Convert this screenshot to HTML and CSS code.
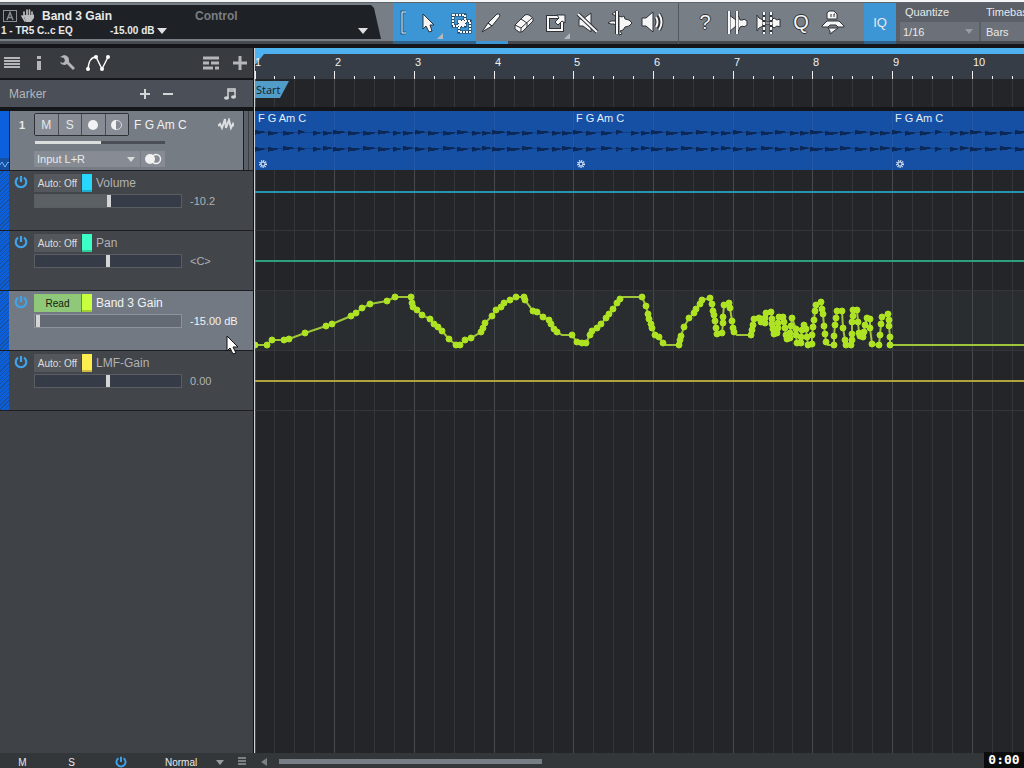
FILE: index.html
```
<!DOCTYPE html>
<html lang="en">
<head>
  <meta charset="UTF-8" />
  <meta name="viewport" content="width=device-width, initial-scale=1" />
  <title>Arrange - Band 3 Gain</title>
  <link rel="stylesheet" href="styles.css">
</head>
<body>
  <svg class="defs" aria-hidden="true">
    <symbol id="power" viewBox="0 0 14 14">
      <path d="M4 2.6A5.3 5.3 0 1 0 10 2.6" fill="none" stroke="currentColor" stroke-width="2.2"/>
      <path d="M7 1v6" stroke="currentColor" stroke-width="2.2"/>
    </symbol>
  </svg>

  <header class="toolbar">
    <div class="display">
      <div class="display-row">
        <svg class="badge-a" viewBox="0 0 14 12"><rect x=".5" y=".5" width="13" height="11" fill="none" stroke="#8b8e92"/><path d="M4 10l3-7.5L10 10M5 7.5h4" fill="none" stroke="#8b8e92" stroke-width="1.4"/></svg>
        <svg class="hand" viewBox="0 0 14 14"><path d="M3 8V3M6 7V1M8.5 7V1M11 8V3M1 7l3 5" stroke="#b9bbbd" stroke-width="1.7" stroke-linecap="round"/><path d="M2.5 6H12l1-1v4l-3 4H5z" fill="#b9bbbd"/></svg>
        <b class="param">Band 3 Gain</b>
        <b class="control">Control</b>
      </div>
      <div class="display-row small">
        <b class="source">1 - TR5 C..c EQ</b>
        <b>-15.00 dB</b>
        <i class="tri"></i>
        <i class="tri last"></i>
      </div>
    </div>

    <div class="tools">
      <div class="tool-group active">
        <svg class="bracket" viewBox="0 0 20 38"><path d="M13 9H9v21h4" fill="none" stroke="#2b5f88" stroke-width="3"/><path d="M13 9H9v21h4" fill="none" stroke="#e8f3fb"/></svg>
        <button class="tool more" aria-label="Arrow tool"><svg viewBox="0 0 32 38"><path d="M10 11v15l3-3 3 6 3-1-2-6h4z"/></svg></button>
        <button class="tool" aria-label="Range tool"><svg viewBox="0 0 32 38"><g fill="none" stroke="#23415a" stroke-width="3"><path d="M8 12h12v11H8zM14 18h11v11H14z"/></g><g class="line" stroke-dasharray="2 1"><path d="M8 12h12v11H8zM14 18h11v11H14z"/></g><path class="plain" d="M14 18h6v5h-6z"/></svg></button>
      </div>
      <button class="tool current" aria-label="Split tool"><svg viewBox="0 0 32 38"><path d="M6 29l6-9 4 3zM12 20l9-9q3-1 3 2l-8 10z"/></svg></button>
      <button class="tool" aria-label="Eraser tool"><svg viewBox="0 0 32 38"><path d="M7 22l10-10q2-1 4 0l4 3v3L14 29h-3l-4-3z"/><path d="M7 22l6 3 11-10M13 25v4M13 16l6 4v4" fill="none"/></svg></button>
      <button class="tool more" aria-label="Paint tool"><svg viewBox="0 0 32 38"><g fill="none"><path d="M8 14h14v13H8z" stroke-width="4"/><path class="line" d="M8 14h14v13H8z"/></g><path d="M15 19l4-4-2-3h8v8l-3-2-4 4z"/></svg></button>
      <button class="tool" aria-label="Mute tool"><svg viewBox="0 0 32 38"><path d="M7 16h4l8-6v19l-8-6H7z"/><path d="M6 11l19 18" stroke-width="4"/><path class="line" d="M6 11l19 18"/></svg></button>
      <button class="tool" aria-label="Bend tool"><svg viewBox="0 0 32 38"><path d="M4 20l3-2h4l1-2v-3l-4-2 4-3h1v15l-3-2H7zM15 13l3 1 2-1 1 3 4 1 3 3-3 3-4 1-2 3-3 1 2 3-3 1z"/><path d="M13 8v23" stroke-width="4"/><path class="line" d="M13 8v23"/></svg></button>
      <button class="tool" aria-label="Listen tool"><svg viewBox="0 0 32 38"><path d="M6 15h4l7-6v20l-7-6H6z"/><path d="M20 14q3 5 0 10M23 11q5 8 0 16" fill="none" stroke-width="4"/><path class="line" d="M20 14q3 5 0 10M23 11q5 8 0 16"/></svg></button>
    </div>

    <div class="tools second">
      <button class="tool glyph">?</button>
      <button class="tool" aria-label="Strip silence"><svg viewBox="0 0 32 38"><path d="M8 12l7 5v6l-7 6zM16 12l2 2 1 3h3l1-1 3 2v4l-3 2-1-1-3 1-1 3-2 2z"/><path d="M8 8v23M16 8v23" stroke-width="3"/><path class="line" d="M8 8v23M16 8v23"/></svg></button>
      <button class="tool" aria-label="Quantize events"><svg viewBox="0 0 32 38"><path d="M4 12l2 3 4 2v2h9v-2l2-2 3 2 3-1v8l-3-1-3 2-2-2v-2h-9v2l-4 2-2 3z"/><path d="M11 9v22M18 9v22" stroke-width="3"/><path class="line" d="M11 9v22M18 9v22" stroke-dasharray="3 2"/></svg></button>
      <button class="tool glyph">Q</button>
      <button class="tool" aria-label="Macro toolbar"><svg viewBox="0 0 32 38"><path d="M10 16V10l2-2h5l3 3v5zM5 23l5-5h12l5 5v1h-6l-2-2h-6l-2 2H5zM11 25h10l-4 3-4 3v-3z"/><path d="M14 11v3M17 14v-3h1" fill="none"/></svg></button>
    </div>

    <button class="iq">IQ</button>

    <div class="settings">
      <div class="setting">
        <label for="quantize">Quantize</label>
        <div class="pick"><select id="quantize"><option>1/16</option></select></div>
      </div>
      <div class="setting">
        <label for="timebase">Timebase</label>
        <div class="pick bare"><select id="timebase"><option>Bars</option></select></div>
      </div>
    </div>
  </header>

  <main>
    <section class="tracks">
      <div class="track-tools">
        <button aria-label="Track list"><svg width="16" height="12"><path d="M0 1h16M0 4h16M0 7h16M0 10h16" stroke="#b4b6b9" stroke-width="2"/></svg></button>
        <button aria-label="Inspector"><svg width="4" height="16"><path d="M0 1h4v3H0zM0 6h4v9H0z" fill="#b4b6b9"/></svg></button>
        <button aria-label="Tools"><svg width="16" height="16"><path d="M1 2l4 1 1 3-2 2-3-1q1 3 5 3l2-1 6 6 2-2-6-6Q11 1 5 0z" fill="#b4b6b9"/></svg></button>
        <button aria-label="Show automation"><svg width="24" height="18"><path d="M2 15Q3 3 10 3l6 12 6-12" fill="none" stroke="#fff" stroke-width="1.4"/><g fill="#fff"><circle cx="2" cy="15" r="2"/><circle cx="10" cy="3" r="2"/><circle cx="16" cy="15" r="2"/><circle cx="22" cy="3" r="2"/></g></svg></button>
        <span class="spacer"></span>
        <button aria-label="Arranger"><svg width="16" height="14"><path d="M0 2h16M0 7h6M8 7h8M0 12h10M12 12h4" stroke="#b4b6b9" stroke-width="3"/></svg></button>
        <button aria-label="Add track"><svg width="16" height="16"><path d="M8 1v14M1 8h14" stroke="#b4b6b9" stroke-width="3"/></svg></button>
      </div>
      <div class="marker-row">
        <span>Marker</span>
        <button aria-label="Add marker"><svg width="10" height="10"><path d="M5 0v10M0 5h10" stroke="#d2d4d6" stroke-width="2"/></svg></button>
        <button aria-label="Remove marker"><svg width="10" height="10"><path d="M0 5h10" stroke="#d2d4d6" stroke-width="2"/></svg></button>
        <span class="spacer"></span>
        <svg width="12" height="12"><path d="M4 10V1h7v8M4 3h7" fill="none" stroke="#d2d4d6" stroke-width="1.5"/><ellipse cx="2.5" cy="10" rx="2.5" ry="1.7" fill="#d2d4d6"/><ellipse cx="9.5" cy="9" rx="2.5" ry="1.7" fill="#d2d4d6"/></svg>
      </div>

      <div class="track">
        <div class="track-color"><svg width="9" height="12"><path d="M0 7l2-3 3 5 3-5 1 1" fill="none" stroke="#6eb8ff"/></svg></div>
        <b class="track-num">1</b>
        <div class="track-body">
          <div class="track-line">
            <div class="track-buttons">
              <button>M</button>
              <button>S</button>
              <button aria-label="Record"><svg width="12" height="12"><circle cx="6" cy="6" r="5" fill="#f2f2f2"/></svg></button>
              <button aria-label="Monitor"><svg width="12" height="12"><circle cx="6" cy="6" r="4.500" fill="none" stroke="#d8dadc"/><path d="M5 1a5 5 0 0 0 0 10z" fill="#f2f2f2"/></svg></button>
            </div>
            <span class="track-name">F G Am C</span>
            <svg class="wave-icon" width="16" height="14"><path d="M0 8l2-2 2 4 3-9 1 9 3-8 2 8 2-4 1 2" fill="none" stroke="#dcdee0" stroke-width="2"/></svg>
          </div>
          <input class="thin" type="range" value="51" aria-label="Track volume" />
          <div class="track-line">
            <div class="pick input"><select aria-label="Input"><option>Input L+R</option></select></div>
            <button class="stereo" aria-label="Stereo"><svg width="18" height="12"><circle cx="12" cy="6" r="4.500" fill="none" stroke="#f2f2f2" stroke-width="1.500"/><circle cx="6" cy="6" r="5" fill="#f2f2f2"/></svg></button>
          </div>
        </div>
        <div class="track-edge"></div>
      </div>
      <div id="params"></div>
    </section>

    <section class="timeline" id="timeline">
      <div class="loop-bar"></div>
      <svg class="ruler" id="ruler"></svg>
      <div class="marker-lane">
        <svg class="grid"></svg>
        <span class="flag">Start</span>
      </div>
      <div class="arrange">
        <svg class="grid"></svg>
        <svg class="clips" id="clips"></svg>
        <div id="lanes"></div>
      </div>
    </section>
  </main>

  <footer>
    <div class="footer-left">
      <button>M</button>
      <button>S</button>
      <button aria-label="Power"><svg class="power" width="12" height="12"><use href="#power"/></svg></button>
      <div class="pick size"><select aria-label="Track height"><option>Normal</option></select></div>
      <svg width="8" height="10"><path d="M0 1h8M0 4h8M0 7h8" stroke="#7d8084" stroke-width="2"/></svg>
    </div>
    <div class="scroll"><i class="tri-left"></i><i class="thumb"></i></div>
    <div class="time">0:00</div>
  </footer>

  <svg class="pointer" width="13" height="20" viewBox="0 0 13 20"><path d="M1 1v15l3-3 3 6 3-1-3-6h5z" fill="#fff" stroke="#111"/></svg>

  <script>
    const BAR = 79.7;
    const width = document.getElementById("timeline").clientWidth;
    const bars = Math.ceil(width / BAR);

    const bandGain = [
      [0,54],[12,54],[17,49],[29,49],[34,48],[50,42],[71,35],[77,33],[96,25],[101,22],[107,17],[115,13],[132,10],[140,6],
      [156,6],[157,12],[158,16],[162,19],[167,24],[175,28],[179,33],[183,36],[187,40],[194,48],[201,54],[205,54],[210,49],
      [216,47],[226,41],[228,37],[230,32],[237,25],[241,19],[246,16],[249,12],[255,9],[261,6],[269,6],[270,9],[278,20],
      [282,21],[288,26],[294,29],[296,33],[299,38],[302,41],[307,44],[317,44],[322,51],[327,52],[331,52],[335,44],[337,40],
      [342,37],[346,33],[351,27],[354,23],[358,18],[362,12],[365,8],[368,6],[387,6],[391,15],[393,23],[394,28],[396,33],
      [397,37],[400,44],[404,46],[408,52],[411,54],[424,54],[425,49],[426,45],[429,36],[434,27],[439,22],[441,18],[445,13],
      [447,9],[455,7],[457,13],[458,20],[459,24],[460,30],[461,37],[462,43],[467,42],[468,32],[468,26],[469,14],[474,12],
      [475,17],[477,30],[478,37],[479,41],[482,44],[496,44],[497,39],[498,34],[499,28],[504,27],[506,31],[510,32],[510,27],
      [511,22],[516,21],[517,28],[517,33],[518,38],[519,43],[522,42],[523,37],[523,32],[524,26],[528,26],[529,31],[530,37],
      [531,44],[532,48],[535,47],[535,42],[536,35],[537,27],[541,38],[541,44],[542,52],[546,52],[546,46],[547,39],[549,34],
      [551,38],[552,46],[553,54],[557,53],[557,44],[558,36],[559,29],[560,20],[561,14],[566,11],[567,18],[568,23],[569,35],
      [570,43],[571,51],[573,54],[579,54],[579,45],[580,34],[581,27],[582,20],[587,20],[588,37],[590,49],[591,54],[596,54],
      [597,49],[597,43],[597,31],[598,25],[598,19],[602,19],[603,31],[604,42],[605,45],[608,46],[609,41],[610,34],[612,27],
      [615,28],[615,37],[617,53],[624,54],[625,44],[626,33],[627,26],[633,23],[634,29],[634,35],[635,46],[635,54]
    ];
    // corners of the curve that carry no handle
    const bare = [307, 368, 411, 482, 573];

    const params = [
      { name: "Volume", value: "-10.2", mode: "Auto: Off", pos: 51, fill: true, color: "cyan", y: 21 },
      { name: "Pan", value: "&lt;C&gt;", mode: "Auto: Off", pos: 50, color: "mint", y: 30 },
      { name: "Band 3 Gain", value: "-15.00 dB", mode: "Read", pos: 0, color: "lime", selected: true, points: bandGain },
      { name: "LMF-Gain", value: "0.00", mode: "Auto: Off", pos: 50, color: "yellow", y: 30 },
    ];

    // one loop of hits: start and end of each
    const hits = [
      [0,10],[13,23],[28,39],[43,50],[58,66],[68,77],[78,90],[93,105],[108,120],[123,135],[138,146],[148,158],[160,170],
      [173,184],[188,200],[202,213],[217,226],[227,236],[237,250],[252,265],[267,278],[282,294],[297,306],[307,317],
    ];

    let grid = "";
    let ruler = "";
    let clipLines = "";
    for (let i = 0; i < bars * 4; i++) {
      const x = Math.floor((i * BAR) / 4);
      const major = i % 4 === 0;
      grid += `<rect class="${major ? "major" : "minor"}" x="${x}" y="0" width="1" height="100%" />`;
      ruler += `<rect class="tick" x="${x}" y="${major ? 17 : 22}" width="1" height="8" />`;
      if (major) {
        ruler += `<text x="${x + (i ? 1 : 0)}" y="12">${i / 4 + 1}</text>`;
        clipLines += `<rect class="clip-line" x="${x}" y="0" width="1" height="59" />`;
      }
    }
    document.querySelectorAll(".grid").forEach((el) => {
      el.innerHTML = grid;
    });
    document.getElementById("ruler").innerHTML = `<path class="corner" d="M0 0h9L1 10H0z" />` + ruler;

    let clips = `<rect class="clip" width="100%" height="59" />` + clipLines;
    for (let c = 0; c * 4 < bars; c++) {
      const left = Math.floor(c * 4 * BAR);
      [21, 37].forEach((y, row) => {
        clips += `<rect class="wave" opacity=".4" x="${left}" y="${y}" width="318" height="1" />`;
        hits.forEach(([a, b], i) => {
          const peak = (i + row) % 3 === 0 ? 2 : 1;
          clips += `<path class="wave" d="M${left + a} ${y - peak}h2l2 1H${left + b - 2}l2 1-1 1h-3l-1 1H${left + a + 2}l-2 1z" />`;
        });
      });
      clips += `<text x="${left + 3}" y="11">F G Am C</text>`;
      clips += `<circle class="gear" cx="${left + 8}" cy="53" r="2" /><circle class="teeth" cx="${left + 8}" cy="53" r="3" />`;
    }
    document.getElementById("clips").innerHTML = clips;

    document.getElementById("params").innerHTML = params.map((p, i) => `
      <div class="param-row ${p.color} ${p.selected ? "selected" : ""}">
        <div class="hatch"></div>
        <button class="switch" aria-label="${p.name} on"><svg class="power" width="14" height="14"><use href="#power"/></svg></button>
        <div class="param-body">
          <div class="param-line">
            <button class="mode">${p.mode}</button>
            <i class="swatch"></i>
            <label for="fader${i}">${p.name}</label>
          </div>
          <div class="param-line">
            <input class="fader ${p.fill ? "filled" : ""}" id="fader${i}" type="range" value="${p.pos}" />
            <output for="fader${i}">${p.value}</output>
          </div>
        </div>
      </div>`).join("");

    document.getElementById("lanes").innerHTML = params.map((p) => {
      const line = p.points
        ? `<polyline points="${p.points.join(" ")} ${width},54" />` +
          p.points.filter(([x]) => !bare.includes(x)).map(([x, y]) => `<circle cx="${x}" cy="${y}" r="3" />`).join("")
        : `<rect class="level" y="${p.y - 1}" width="100%" height="2" />`;
      return `<svg class="lane ${p.color} ${p.selected ? "selected" : ""}">${line}</svg>`;
    }).join("");
  </script>
</body>
</html>
```
FILE: styles.css
```
* {
  box-sizing: border-box;
}
body {
  display: flex;
  flex-direction: column;
  height: 100vh;
  margin: 0;
  overflow: hidden;
  border-top: 2px solid #f4f5f6;
  background: #15161a;
  color: #e8e9ea;
  font: 12px "Liberation Sans", Arial, sans-serif;
}
button,
select,
input {
  margin: 0;
  padding: 0;
  border: 0;
  background: none;
  color: inherit;
  font: inherit;
  appearance: none;
}
svg {
  display: block;
  flex: none;
}
.defs {
  position: absolute;
  width: 0;
  height: 0;
}
.spacer {
  flex: 1;
}
.power {
  color: #3fa4ee;
}

/* toolbar */
.toolbar {
  display: flex;
  flex: none;
  height: 42px;
  border-top: 1px solid #5f636b;
  background: linear-gradient(#787e86 38px, #46494e 38px);
}
.display {
  width: 381px;
  height: 34px;
  margin: 2px 12px 0 0;
  padding-top: 3px;
  background: #1e2125;
  clip-path: polygon(0 0, 371px 0, 374px 3px, 381px 34px, 0 34px);
}
.display-row {
  display: flex;
  align-items: center;
  height: 16px;
  padding-left: 3px;
}
.display-row.small {
  height: 13px;
  padding: 0 13px 0 1px;
  font-size: 10px;
}
.badge-a {
  width: 14px;
  height: 12px;
}
.hand {
  width: 14px;
  height: 14px;
  margin: 0 7px 0 4px;
}
.param {
  width: 153px;
}
.control {
  color: #7b7e82;
}
.source {
  width: 109px;
}
.tri {
  margin-left: 3px;
  border: 5px solid transparent;
  border-top: 6px solid #e0e1e2;
  border-bottom: 0;
}
.tri.last {
  margin-left: auto;
}
.tools {
  display: flex;
  padding-right: 10px;
  border-right: 1px solid #54585f;
}
.tools.second {
  padding: 0 15px 0 10px;
  border: 0;
}
.tool-group {
  display: flex;
}
.tool-group.active {
  width: 83px;
  background: linear-gradient(#3c96d6 38px, #30638d 38px);
}
.bracket {
  width: 20px;
  height: 38px;
}
.tool {
  position: relative;
  flex: none;
  width: 32px;
  height: 41px;
  border-bottom: 3px solid transparent;
}
.tool.current {
  border-color: #3c96d6;
}
.tool svg {
  width: 32px;
  height: 38px;
  fill: #f6f6f6;
  stroke: #2e3136;
  stroke-width: 1;
}
.tool svg .line {
  fill: none;
  stroke: #f6f6f6;
  stroke-width: 2;
}
.tool svg .plain {
  stroke: none;
}
.tool.more::after {
  content: "";
  position: absolute;
  right: 2px;
  bottom: 2px;
  border: 3px solid transparent;
  border-right-color: #b4b9c0;
  border-bottom-color: #b4b9c0;
}
.tool.glyph {
  color: #f6f6f6;
  font-size: 20px;
  text-shadow: 1px 0 #2e3136, -1px 0 #2e3136, 0 1px #2e3136, 0 -1px #2e3136;
}
.iq {
  flex: none;
  width: 32px;
  height: 41px;
  border-bottom: 3px solid #30638d;
  background: #3c96d6;
  font-size: 13px;
}
.settings {
  display: flex;
  flex: 1;
  gap: 2px;
  min-width: 0;
  height: 38px;
  padding-left: 4px;
  overflow: hidden;
  background: #5b5f67;
  font-size: 11px;
}
.setting {
  flex: none;
  width: 79px;
}
.setting label {
  display: block;
  height: 19px;
  padding-left: 5px;
  line-height: 19px;
}
.pick {
  position: relative;
  height: 19px;
  background: #6c7179;
}
.pick select {
  width: 100%;
  height: 100%;
  padding-left: 3px;
}
.pick.bare select {
  padding-left: 5px;
}
.pick::after {
  content: "";
  position: absolute;
  top: 7px;
  right: 6px;
  border: 4px solid transparent;
  border-top: 5px solid #989ca1;
  border-bottom: 0;
  pointer-events: none;
}
.pick.bare::after {
  display: none;
}

/* main area */
main {
  display: flex;
  flex: 1;
  min-height: 0;
  margin-top: 4px;
}
.tracks {
  flex: none;
  width: 254px;
  border-right: 1px solid #111;
  background: #3f4246;
}
.track-tools {
  display: flex;
  align-items: center;
  gap: 13px;
  height: 32px;
  padding: 0 5px 0 4px;
  border-bottom: 2px solid #15161a;
  background: #383b3f;
}
.track-tools button:nth-child(2) {
  margin: 0 5px 0 4px;
}
.track-tools button:nth-child(4) {
  margin-left: -2px;
}
.marker-row {
  display: flex;
  align-items: center;
  gap: 13px;
  height: 31px;
  padding: 0 17px 0 9px;
  border-bottom: 4px solid #15161a;
  background: #4b5058;
  color: #b5b7ba;
}
.marker-row span:first-child {
  width: 118px;
}
.track {
  display: flex;
  height: 60px;
  border-bottom: 1px solid #1c1e21;
  background: #767c84;
}
.track-color {
  display: flex;
  align-items: flex-end;
  width: 10px;
  border-right: 1px solid #24272c;
  background: #0a60dd;
}
.track-color svg {
  background: #164f9f;
}
.track-num {
  width: 24px;
  padding-top: 8px;
  text-align: center;
  font-size: 11px;
}
.track-body {
  flex: 1;
  padding-top: 2px;
}
.track-line {
  display: flex;
  align-items: center;
  gap: 1px;
}
.track-buttons {
  display: flex;
  gap: 1px;
  width: 95px;
  height: 23px;
  border: 1px solid #2e3136;
  border-radius: 2px;
  background: #4a4d53;
}
.track-buttons button {
  display: flex;
  flex: 1;
  align-items: center;
  justify-content: center;
  background: #878c94;
}
.track-name {
  margin-left: 4px;
  color: #f0f1f1;
}
.wave-icon {
  margin: 0 9px 0 auto;
}
.thin {
  display: block;
  width: 130px;
  height: 3px;
  margin: 5px 0 7px 1px;
  background: linear-gradient(90deg, #dcdddd 51%, #4b4f55 51%);
}
.thin::-webkit-slider-thumb {
  appearance: none;
  width: 1px;
  height: 3px;
}
.pick.input {
  width: 106px;
  height: 16px;
  background: #878c94;
  font-size: 11px;
}
.pick.input::after {
  top: 6px;
  right: 5px;
  border-top-color: #d9dbdd;
}
.stereo {
  display: flex;
  align-items: center;
  justify-content: center;
  width: 24px;
  height: 16px;
  background: #878c94;
}
.track-edge {
  width: 10px;
  border-left: 1px solid #1c1e21;
  background: linear-gradient(90deg, #5b5f67 4px, #3a3d42 4px, #3a3d42 5px, #5b5f67 5px);
}
.param-row {
  display: flex;
  height: 60px;
  border-bottom: 1px solid #1c1e21;
  background: #424549;
  color: #b0b2b4;
}
.param-row.selected {
  background: #727982;
  color: #f2f3f3;
}
.hatch {
  width: 9px;
  background: repeating-linear-gradient(135deg, #0a60dd 0 2px, #1a4f9f 2px 3px);
}
.switch {
  display: flex;
  width: 25px;
  padding: 4px 0 0 5px;
}
.param-body {
  flex: 1;
  padding-top: 3px;
}
.param-line {
  display: flex;
  align-items: center;
  gap: 1px;
  height: 18px;
}
.param-line + .param-line {
  gap: 8px;
}
.mode {
  width: 47px;
  height: 18px;
  background: #54585c;
  color: #dcdddd;
  font-size: 10px;
}
.selected .mode {
  background: #8fc878;
  color: #14210e;
}
.swatch {
  width: 10px;
  height: 18px;
  margin-right: 3px;
  border-bottom: 2px solid #0003;
}
.cyan .swatch {
  background: #28d7fc;
}
.mint .swatch {
  background: #3cffc8;
}
.lime .swatch {
  background: #c8ff3e;
}
.yellow .swatch {
  background: #ffed50;
}
.fader {
  width: 148px;
  height: 14px;
  padding: 0 1px;
  border: 1px solid #5a5e63;
  background: #353c47;
}
.fader.filled {
  background: linear-gradient(90deg, #5b6064 51%, #353c47 51%);
}
.selected .fader {
  border-color: #8e939b;
  background: #646a73;
}
.fader::-webkit-slider-thumb {
  appearance: none;
  width: 4px;
  height: 12px;
  background: #d4d5d6;
}
output {
  font-size: 11px;
}

/* timeline */
.timeline {
  display: flex;
  flex: 1;
  flex-direction: column;
  min-width: 0;
  overflow: hidden;
  border-left: 1px solid #d0d1d2;
  background: #242529;
}
.loop-bar {
  flex: none;
  height: 6px;
  background: #4fb2f0;
}
.ruler {
  width: 100%;
  height: 25px;
  background: #363d47;
  fill: #f0f0f0;
  font-size: 11px;
}
.corner {
  fill: #4fb2f0;
}
.marker-lane {
  position: relative;
  flex: none;
  height: 32px;
  padding-top: 2px;
  border-bottom: 4px solid #15161a;
}
.flag {
  position: relative;
  display: block;
  width: 34px;
  height: 17px;
  padding-left: 1px;
  background: #529cc8;
  color: #14202c;
  font: 11px/17px "Open Sans", sans-serif;
  clip-path: polygon(0 0, 100% 0, 25px 100%, 0 100%);
}
.arrange {
  position: relative;
  flex: 1;
  min-height: 0;
}
.grid {
  position: absolute;
  inset: 0;
  width: 100%;
  height: 100%;
}
.minor {
  fill: #34363a;
}
.major {
  fill: #47494d;
}
.clips {
  position: relative;
  width: 100%;
  height: 60px;
  fill: #e4edf8;
  font-size: 11px;
}
.clip {
  fill: #1550a4;
}
.clip-line {
  fill: #2459aa;
}
.wave {
  fill: #0b2856;
}
.gear {
  fill: none;
  stroke: #e4edf8;
}
.teeth {
  fill: none;
  stroke: #e4edf8;
  stroke-width: 2;
  stroke-dasharray: 1 1;
}
.lane {
  position: relative;
  width: 100%;
  height: 60px;
  border-bottom: 1px solid #34363a;
}
.lane.selected {
  background: #3d474740;
}
.lane polyline {
  fill: none;
  stroke: #9fc63a;
  stroke-width: 2;
}
.lane circle {
  fill: #aee324;
  stroke: #aee324;
}
.lane.cyan .level {
  fill: #2696b0;
}
.lane.mint .level {
  fill: #2d9f80;
}
.lane.yellow .level {
  fill: #b0a23c;
}

/* footer */
footer {
  display: flex;
  flex: none;
  height: 15px;
  background: #33373a;
  font-size: 10px;
}
.footer-left {
  display: flex;
  align-items: center;
  width: 254px;
  padding: 3px 0 0 18px;
}
.footer-left button {
  width: 9px;
  margin-right: 40px;
}
.footer-left button:nth-child(3) {
  width: 12px;
  margin: 0 35px 0 -1px;
}
.footer-left .pick {
  width: 68px;
  height: 12px;
  margin-right: 8px;
  background: none;
}
.footer-left .pick::after {
  top: 4px;
}
.scroll {
  display: flex;
  flex: 1;
  align-items: center;
  padding-top: 2px;
}
.tri-left {
  margin: 0 12px 0 7px;
  border: 4px solid transparent;
  border-right: 6px solid #7b8087;
  border-left: 0;
}
.thumb {
  width: 36%;
  height: 5px;
  background: #787e86;
}
.time {
  width: 40px;
  margin-top: -1px;
  background: #0c0c0d;
  color: #fff;
  text-align: center;
  font: bold 13px/16px "DejaVu Sans Mono", monospace;
}
.pointer {
  position: absolute;
  top: 335px;
  left: 226px;
}
```
